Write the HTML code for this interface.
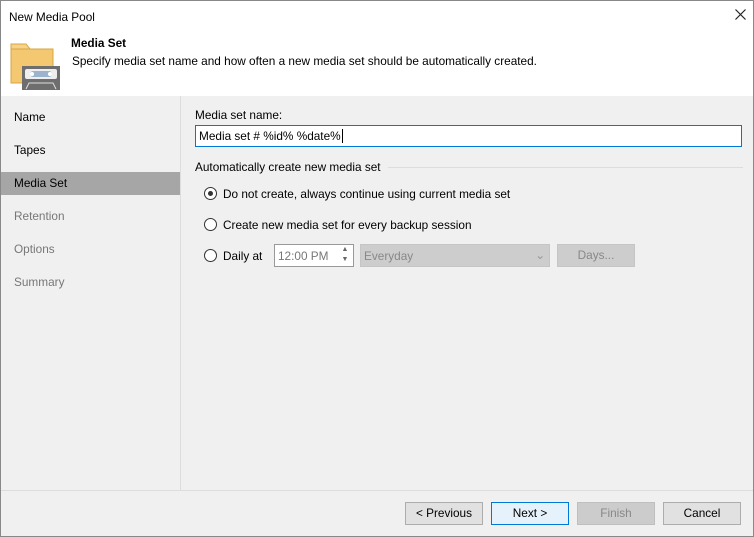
<!DOCTYPE html>
<html><head><style>
*{margin:0;padding:0;box-sizing:border-box}
body{width:754px;height:537px;overflow:hidden;font-family:"Liberation Sans",sans-serif;font-size:11.8px;color:#000;background:#f0f0f0;position:relative}
.win{position:absolute;left:0;top:0;width:754px;height:537px;border:1px solid #888;background:#f0f0f0}
.a{position:absolute;white-space:nowrap}
.hdr{position:absolute;left:0;top:0;width:752px;height:95px;background:#fff}
.nav div{position:absolute;left:0;width:179px;height:23px;padding-left:13px;line-height:23px}
.btn{position:absolute;top:501px;width:78px;height:23px;border:1px solid #adadad;background:#e1e1e1;text-align:center;line-height:21px}
.radio{position:absolute;width:13px;height:13px;border:1px solid #333;border-radius:50%;background:#fff}
</style></head><body><div class="win">
<div class="hdr"></div>
<div class="a" style="left:8px;top:9px">New Media Pool</div>
<svg class="a" style="left:734px;top:8px" width="11" height="11"><path d="M0.5 0.5L10.5 10.5M10.5 0.5L0.5 10.5" stroke="#222" stroke-width="1.2"/></svg>
<svg class="a" style="left:9px;top:40px" width="52" height="50">
<path d="M1 3h15l4 5h-19z" fill="#f5d48a" stroke="#d9a53f"/>
<rect x="1" y="8" width="42" height="34" fill="#f3c870" stroke="#d9a53f"/>
<rect x="12" y="25" width="38" height="24" fill="#6e6e6e"/>
<rect x="15" y="28" width="32" height="10" rx="2" fill="#eee"/>
<rect x="20" y="30" width="22" height="6" rx="3" fill="#9bb3cf"/>
<circle cx="22" cy="33" r="2" fill="#fff"/><circle cx="40" cy="33" r="2" fill="#fff"/>
<path d="M16 48l3-6h24l3 6" fill="none" stroke="#ddd"/>
</svg>
<div class="a" style="left:70px;top:35px;font-weight:bold">Media Set</div>
<div class="a" style="left:71px;top:53px">Specify media set name and how often a new media set should be automatically created.</div>
<div class="a" style="left:179px;top:95px;width:1px;height:394px;background:#ddd"></div>
<div class="nav">
<div style="top:105px">Name</div>
<div style="top:138px">Tapes</div>
<div style="top:171px;background:#a6a6a6">Media Set</div>
<div style="top:204px;color:#777">Retention</div>
<div style="top:237px;color:#777">Options</div>
<div style="top:270px;color:#777">Summary</div>
</div>
<div class="a" style="left:194px;top:107px">Media set name:</div>
<div class="a" style="left:194px;top:124px;width:547px;height:22px;border:1px solid #0078d7;background:#fff;padding:3px 3px;line-height:14px">Media set # %id% %date%<span style="border-left:1px solid #000;margin-left:1px"></span></div>
<div class="a" style="left:194px;top:159px">Automatically create new media set</div>
<div class="a" style="left:387px;top:166px;width:355px;height:1px;background:#ddd"></div>
<div class="radio" style="left:203px;top:186px"><div style="position:absolute;left:3px;top:3px;width:5px;height:5px;border-radius:50%;background:#333"></div></div>
<div class="a" style="left:222px;top:186px">Do not create, always continue using current media set</div>
<div class="radio" style="left:203px;top:217px"></div>
<div class="a" style="left:222px;top:217px">Create new media set for every backup session</div>
<div class="radio" style="left:203px;top:248px"></div>
<div class="a" style="left:222px;top:248px">Daily at</div>
<div class="a" style="left:273px;top:243px;width:80px;height:23px;border:1px solid #999;background:#fff;color:#777;padding:4px 3px">12:00 PM</div>
<div class="a" style="left:336px;top:244px;width:16px;height:21px;color:#666;font-size:7px;line-height:10px;text-align:center">▲<br>▼</div>
<div class="a" style="left:359px;top:243px;width:190px;height:23px;border:1px solid #c5c5c5;background:#cdcdcd;color:#888;padding:4px 3px">Everyday<span style="position:absolute;right:4px;top:3px;color:#999">⌄</span></div>
<div class="a" style="left:556px;top:243px;width:78px;height:23px;border:1px solid #c5c5c5;background:#cdcdcd;color:#888;text-align:center;line-height:21px">Days...</div>
<div class="a" style="left:0;top:489px;width:752px;height:1px;background:#ddd"></div>
<div class="btn" style="left:404px">&lt; Previous</div>
<div class="btn" style="left:490px;border-color:#0078d7;background:#e5f1fb">Next &gt;</div>
<div class="btn" style="left:576px;border-color:#bfbfbf;background:#ccc;color:#888">Finish</div>
<div class="btn" style="left:662px">Cancel</div>
</div></body></html>
